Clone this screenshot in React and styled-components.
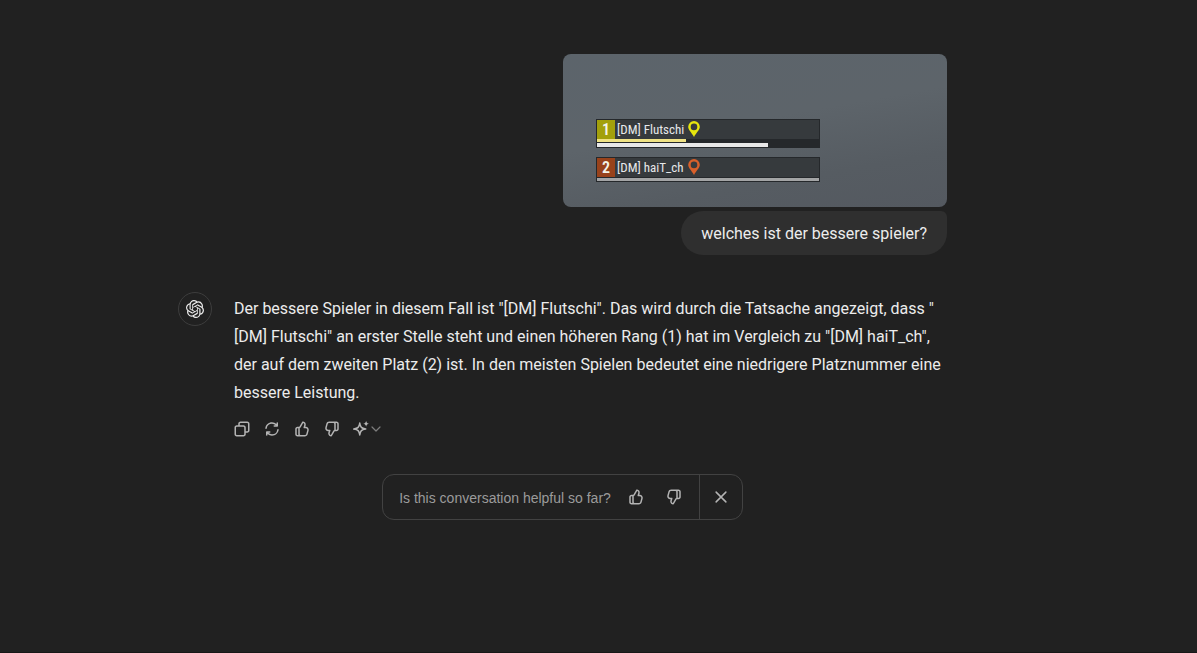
import React from "react";
import styled, { createGlobalStyle } from "styled-components";
import { SiOpenai } from "react-icons/si";

const GlobalStyle = createGlobalStyle`
  * { box-sizing: border-box; }
  html { background: #212121; }
  body {
    margin: 0;
    color: #ececec;
    font-family: Roboto, "Liberation Sans", sans-serif;
    font-size: 16px;
    line-height: 28px;
  }
  p { margin: 0; }
`;

const Page = styled.div`
  min-height: 100vh;
  padding: 54px 72px 32px 0;
  border-bottom: 1px solid #171717;
`;

const Thread = styled.main`
  width: 100%;
  max-width: 769px;
  margin: 0 auto;
  display: flex;
  flex-direction: column;
`;

const UserTurn = styled.section`
  display: flex;
  flex-direction: column;
  align-items: flex-end;
  gap: 4px;
`;

const Attachment = styled.figure`
  margin: 0;
  width: 384px;
  max-width: 100%;
  height: 153px;
  padding: 65px 33px 0;
  border-radius: 8px;
  background: linear-gradient(170deg, #5c646b 0%, #5d646a 45%, #565c62 75%, #545960 100%);
  display: flex;
  flex-direction: column;
  gap: 9px;
`;

const PlayerRow = styled.div`
  width: 224px;
  padding: 1px;
  background: #25282b;
`;

const PlayerHead = styled.div`
  height: 19px;
  display: flex;
  align-items: center;
  gap: 2px;
  background: #363a3d;
  color: #e6e8e9;
  font-family: "Roboto Condensed", Roboto, sans-serif;
  font-size: 13px;
  line-height: 19px;
  white-space: nowrap;
`;

const Rank = styled.span`
  width: 18px;
  height: 19px;
  background: ${(p) => p.$color};
  color: #f4f4ea;
  font-size: 16px;
  font-weight: 600;
  text-align: center;
`;

const Pin = styled.svg`
  width: 12px;
  height: 16px;
  margin: 0 2px 2px;
`;

const Bar = styled.div`
  width: ${(p) => p.$width};
  height: ${(p) => p.$height}px;
  margin-top: ${(p) => p.$gap || 0}px;
  background: ${(p) => p.$color};
`;

const Bubble = styled.p`
  padding: 9px 20px 7px;
  border-radius: 22px 6px 22px 22px;
  background: #2f2f2f;
`;

const AssistantTurn = styled.section`
  display: flex;
  align-items: flex-start;
  gap: 22px;
  margin-top: 37px;
`;

const Avatar = styled.div`
  flex: none;
  width: 34px;
  height: 34px;
  border: 1px solid #3d3d3d;
  border-radius: 50%;
  display: grid;
  place-items: center;
`;

const Answer = styled.div`
  flex: 1;
  padding-top: 3px;
`;

const Actions = styled.div`
  display: flex;
  align-items: center;
  gap: 12px;
  margin: 13px 0 0 -1px;
`;

const IconButton = styled.button`
  display: flex;
  align-items: center;
  justify-content: center;
  min-width: 18px;
  height: 18px;
  padding: 0;
  border: 0;
  background: none;
  color: #b4b4b4;
  cursor: pointer;
`;

const Feedback = styled.aside`
  align-self: center;
  display: flex;
  height: 46px;
  margin-top: 36px;
  border: 1px solid #424242;
  border-radius: 12px;
  color: #9b9b9b;
  font-family: "Liberation Sans", Arial, sans-serif;
  font-size: 14px;
  line-height: 20px;
`;

const FeedbackBody = styled.div`
  display: flex;
  align-items: center;
  gap: 16px;
  padding: 0 16px;
`;

const FeedbackText = styled.p`
  padding-top: 2px;
`;

const FeedbackActions = styled.div`
  display: flex;
  gap: 20px;
`;

const CloseButton = styled(IconButton)`
  width: 43px;
  height: 44px;
  border-left: 1px solid #424242;
`;

const Glyph = ({ size = 18, flip, children }) => (
  <svg width={size} height={size} viewBox="0 0 24 24" fill="none" aria-hidden="true">
    <g transform={flip ? "rotate(180 12 12)" : undefined}>{children}</g>
  </svg>
);

const CopyIcon = () => (
  <Glyph>
    <path fill="currentColor" fillRule="evenodd" clipRule="evenodd" d="M7 5C7 3.34315 8.34315 2 10 2H19C20.6569 2 22 3.34315 22 5V14C22 15.6569 20.6569 17 19 17H17V19C17 20.6569 15.6569 22 14 22H5C3.34315 22 2 20.6569 2 19V10C2 8.34315 3.34315 7 5 7H7V5ZM9 7H14C15.6569 7 17 8.34315 17 10V15H19C19.5523 15 20 14.5523 20 14V5C20 4.44772 19.5523 4 19 4H10C9.44772 4 9 4.44772 9 5V7ZM5 9C4.44772 9 4 9.44772 4 10V19C4 19.5523 4.44772 20 5 20H14C14.5523 20 15 19.5523 15 19V10C15 9.44772 14.5523 9 14 9H5Z" />
  </Glyph>
);

const RefreshIcon = () => (
  <Glyph>
    <path fill="currentColor" d="M3.07 10.876C3.623 6.436 7.41 3 12 3a9.15 9.15 0 0 1 6.012 2.254V4a1 1 0 1 1 2 0v4a1 1 0 0 1-1 1H15a1 1 0 1 1 0-2h1.957A7.15 7.15 0 0 0 12 5a7 7 0 0 0-6.946 6.124 1 1 0 1 1-1.984-.248m16.992 1.132a1 1 0 0 1 .868 1.116C20.377 17.564 16.59 21 12 21a9.15 9.15 0 0 1-6-2.244V20a1 1 0 1 1-2 0v-4a1 1 0 0 1 1-1h4a1 1 0 1 1 0 2H7.043A7.15 7.15 0 0 0 12 19a7 7 0 0 0 6.946-6.124 1 1 0 0 1 1.116-.868" />
  </Glyph>
);

const ThumbIcon = ({ down }) => (
  <Glyph flip={down}>
    <path fill="currentColor" fillRule="evenodd" clipRule="evenodd" d="M12.1318 2.50389C12.3321 2.15338 12.7235 1.95768 13.124 2.00775L13.5778 2.06447C16.0449 2.37286 17.636 4.83353 16.9048 7.20993L16.354 8.99999H17.0722C19.7097 8.99999 21.6253 11.5079 20.9313 14.0525L19.5677 19.0525C19.0931 20.7927 17.5124 22 15.7086 22H6C4.34315 22 3 20.6568 3 19V12C3 10.3431 4.34315 8.99999 6 8.99999H8C8.25952 8.99999 8.49914 8.86094 8.6279 8.63561L12.1318 2.50389ZM10 20H15.7086C16.6105 20 17.4008 19.3964 17.6381 18.5262L19.0018 13.5262C19.3488 12.2539 18.391 11 17.0722 11H15C14.6827 11 14.3841 10.8494 14.1956 10.5941C14.0071 10.3388 13.9509 10.0092 14.0442 9.70591L14.9932 6.62175C15.3384 5.49984 14.6484 4.34036 13.5319 4.08468L10.3644 9.62789C10.0522 10.1742 9.56691 10.5859 9 10.8098V19C9 19.5523 9.44772 20 10 20ZM7 11V19C7 19.3506 7.06015 19.6872 7.17071 20H6C5.44772 20 5 19.5523 5 19V12C5 11.4477 5.44772 11 6 11H7Z" />
  </Glyph>
);

const SparkleIcon = () => (
  <Glyph>
    <path stroke="currentColor" strokeWidth="2" strokeLinejoin="round" d="M9 4C9.800 9.700 11.300 11.200 17 12C11.300 12.800 9.800 14.300 9 20C8.200 14.300 6.700 12.800 1 12C6.700 11.200 8.200 9.700 9 4Z" />
    <path fill="currentColor" d="M17.500 1C18 3.700 18.800 4.500 21.500 5C18.800 5.500 18 6.300 17.500 9C17 6.300 16.200 5.500 13.500 5C16.200 4.500 17 3.700 17.500 1Z" />
  </Glyph>
);

const ChevronIcon = () => (
  <svg width="12" height="12" viewBox="0 0 12 12" fill="none" aria-hidden="true">
    <path d="M1 4l4 4 4-4" stroke="#7d7d7d" strokeWidth="1.200" strokeLinecap="round" strokeLinejoin="round" />
  </svg>
);

const CloseIcon = () => (
  <Glyph>
    <path d="M5.500 5.500l13 13M18.500 5.500l-13 13" stroke="currentColor" strokeWidth="2" strokeLinecap="round" />
  </Glyph>
);

const PinIcon = ({ color }) => (
  <Pin viewBox="0 0 12 16" aria-hidden="true">
    <path fill={color} fillRule="evenodd" d="M6 0a5.800 5.800 0 0 1 5.800 5.800C11.800 9 8.500 11.500 6 16 3.500 11.500.2 9 .2 5.800A5.800 5.800 0 0 1 6 0Zm0 2.600a3.300 3.300 0 1 0 0 6.600 3.300 3.300 0 0 0 0-6.600Z" />
  </Pin>
);

const Player = ({ rank, name, color, pin, children }) => (
  <PlayerRow>
    <PlayerHead>
      <Rank $color={color}>{rank}</Rank>
      <span>{name}</span>
      <PinIcon color={pin} />
    </PlayerHead>
    {children}
  </PlayerRow>
);

export default function App() {
  return (
    <>
      <GlobalStyle />
      <Page>
        <Thread>
          <UserTurn>
            <Attachment>
              <Player rank="1" name="[DM] Flutschi" color="#a3a00c" pin="#e6e60e">
                <Bar $width="89px" $height={3} $color="#efe285" />
                <Bar $width="171px" $height={4} $color="#e8e8e8" $gap={1} />
              </Player>
              <Player rank="2" name="[DM] haiT_ch" color="#98421b" pin="#d8602b">
                <Bar $width="100%" $height={3} $gap={1} $color="#a3a4a5" />
              </Player>
            </Attachment>
            <Bubble>welches ist der bessere spieler?</Bubble>
          </UserTurn>

          <AssistantTurn>
            <Avatar>
              <SiOpenai size={18} aria-label="ChatGPT" />
            </Avatar>
            <Answer>
              <p>
                Der bessere Spieler in diesem Fall ist "[DM] Flutschi". Das wird durch die Tatsache angezeigt, dass "<br />
                [DM] Flutschi" an erster Stelle steht und einen höheren Rang (1) hat im Vergleich zu "[DM] haiT_ch",<br />
                der auf dem zweiten Platz (2) ist. In den meisten Spielen bedeutet eine niedrigere Platznummer eine<br />
                bessere Leistung.
              </p>
              <Actions>
                <IconButton aria-label="Copy"><CopyIcon /></IconButton>
                <IconButton aria-label="Regenerate"><RefreshIcon /></IconButton>
                <IconButton aria-label="Good response"><ThumbIcon /></IconButton>
                <IconButton aria-label="Bad response"><ThumbIcon down /></IconButton>
                <IconButton aria-label="Change model"><SparkleIcon /><ChevronIcon /></IconButton>
              </Actions>
            </Answer>
          </AssistantTurn>

          <Feedback>
            <FeedbackBody>
              <FeedbackText>Is this conversation helpful so far?</FeedbackText>
              <FeedbackActions>
                <IconButton aria-label="Helpful"><ThumbIcon /></IconButton>
                <IconButton aria-label="Not helpful"><ThumbIcon down /></IconButton>
              </FeedbackActions>
            </FeedbackBody>
            <CloseButton aria-label="Dismiss"><CloseIcon /></CloseButton>
          </Feedback>
        </Thread>
      </Page>
    </>
  );
}
